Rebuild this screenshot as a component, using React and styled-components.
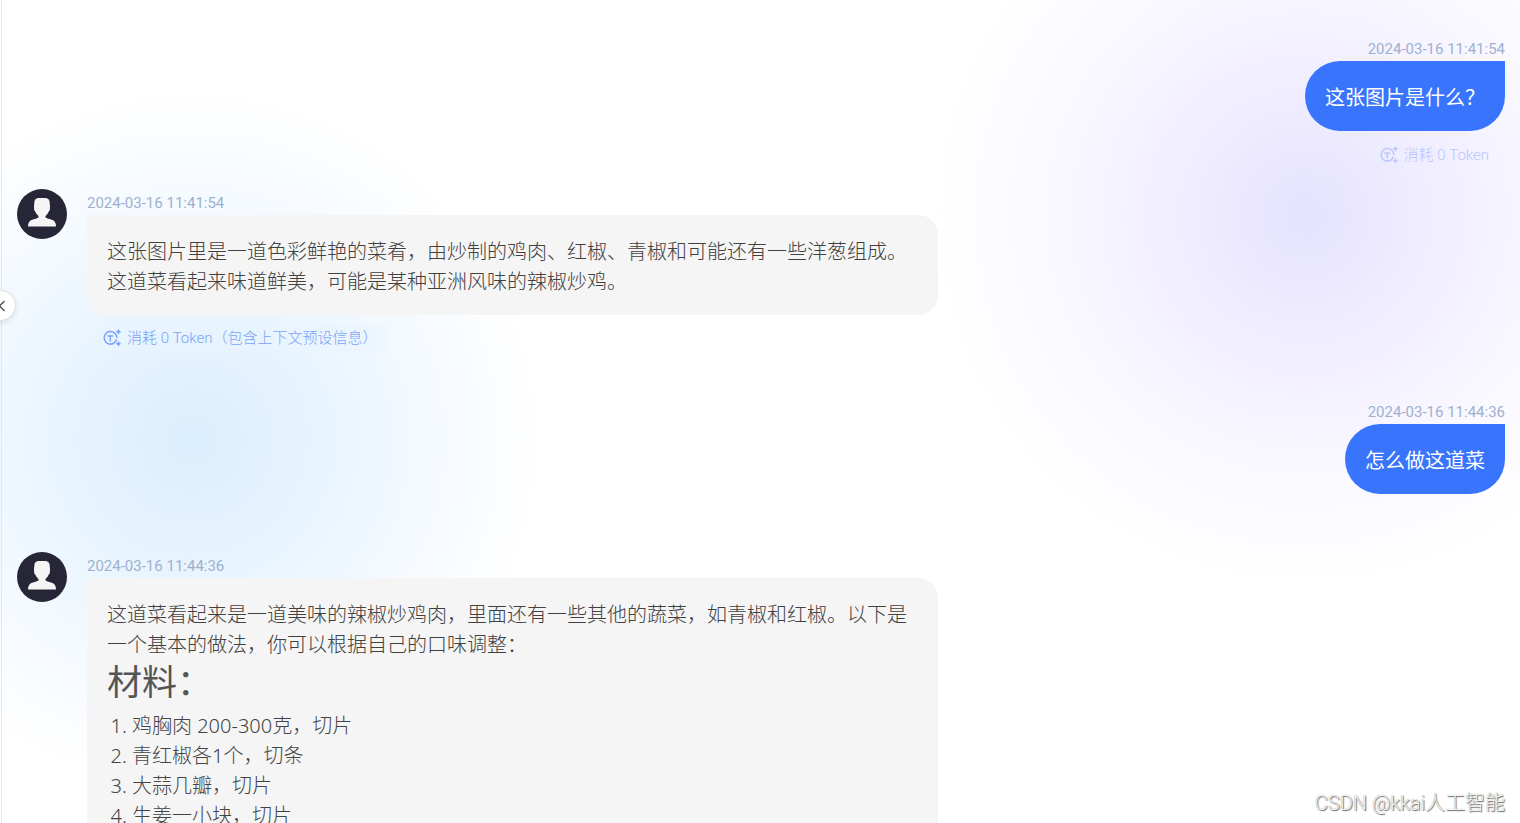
import React from "react";
import styled, { createGlobalStyle } from "styled-components";

const GlobalStyle = createGlobalStyle`
  * { box-sizing: border-box; }
  html, body { margin: 0; height: 100%; overflow: hidden; }
  #root { height: 100%; }
  body {
    font-family: "Noto Sans", "Noto Sans CJK SC", sans-serif;
    font-size: 20px;
    line-height: 30px;
    font-weight: 300;
    color: #404040;
    background: #fff;
  }
`;

const Page = styled.main`
  position: relative;
  height: 100vh;
  overflow: hidden;
  background:
    linear-gradient(#e6e8ee, #e6e8ee) 1px 0 / 1px 100% no-repeat,
    radial-gradient(circle 370px at calc(100% - 215px) 215px, #e5e2ff 0%, #efedff 32%, #f9f8ff 68%, #ffffff00 100%),
    radial-gradient(circle 350px at 192px 440px, #dbeefd 0%, #e7f4fe 35%, #f5faff 70%, #ffffff00 100%),
    #fff;
`;

const Thread = styled.div`
  display: flex;
  flex-direction: column;
  padding: 39px 15px 0 17px;
`;

const UserTurn = styled.section`
  display: flex;
  flex-direction: column;
  align-items: flex-end;
  margin-bottom: ${(p) => (p.$last ? 58 : 21)}px;
`;

const BotTurn = styled.section`
  display: flex;
  align-items: flex-start;
  gap: 20px;
  margin-bottom: 51px;
`;

const BotBody = styled.div`
  display: flex;
  flex-direction: column;
  align-items: flex-start;
  padding-top: 4px;
  flex: 0 1 851px;
  min-width: 0;
`;

const Time = styled.time`
  font: 400 15px/20px Roboto, sans-serif;
  height: 22px;
  color: #9fb0ce;
`;

const UserBubble = styled.p`
  margin: 0;
  padding: 22px 20px 18px;
  border-radius: 35px 0 35px 35px;
  background: #3875fc;
  color: #fff;
  font-weight: 400;
`;

const BotBubble = styled.div`
  width: 100%;
  padding: 22px 20px 18px;
  border-radius: 0 20px 20px 20px;
  background: #f5f5f5;
`;

const Text = styled.p`
  margin: 0;
`;

const Heading = styled.h2`
  margin: 0 0 8px;
  color: #555;
  font-size: 35px;
  line-height: 43px;
  font-weight: 400;
`;

const List = styled.ol`
  margin: 0;
  padding-left: 25px;
  color: #444;
`;

const Usage = styled.div`
  display: flex;
  align-items: center;
  gap: 6px;
  height: 26px;
  margin: ${(p) => (p.$faded ? "11px 4px 0 0" : "10px 0 0 6px")};
  padding: 0 12px 0 10px;
  border-radius: 6px;
  background: ${(p) => (p.$faded ? "transparent" : "#e9f3fe80")};
  color: ${(p) => (p.$faded ? "#b9c7fd" : "#79a3fb")};
  font: 300 15px/20px Roboto, "Noto Sans CJK SC", sans-serif;
`;

const AvatarArt = styled.svg`
  flex: none;
  width: 50px;
  height: 50px;
`;

const Collapse = styled.button`
  position: absolute;
  left: -15px;
  top: 290px;
  width: 31px;
  height: 31px;
  padding: 0;
  display: flex;
  align-items: center;
  justify-content: center;
  border: 1px solid #dcdfe6;
  border-radius: 50%;
  background: #fff;
  color: #4b4f58;
  box-shadow: 0 2px 6px #0000001a;
`;

const Watermark = styled.div`
  position: absolute;
  right: 15px;
  bottom: 5px;
  color: #f4f4f4;
  font-family: Roboto, "Noto Sans CJK SC", sans-serif;
  text-shadow: 1px 1px 1px #666, 0 0 1px #999;
`;

function Avatar() {
  return (
    <AvatarArt viewBox="0 0 50 50" role="img" aria-label="AI">
      <circle cx="25" cy="25" r="25" fill="#272636" />
      <path
        fill="#f5f5f5"
        d="M17.500 12Q18 9.500 21 9H29Q32 9.500 32.500 12L33 17Q33.500 21 31.500 23Q30.500 25.500 28.500 27V28.500Q30 29.500 34 30.500Q39 31.500 39 37.500H11Q11 31.500 16 30.500Q20 29.500 21.500 28.500V27Q19.500 25.500 18.500 23Q16.500 21 17 17Z"
      />
    </AvatarArt>
  );
}

function TokenIcon() {
  return (
    <svg width="18" height="18" viewBox="0 0 18 18" fill="none" stroke="currentColor" strokeWidth="1.500">
      <path d="M11.500 3.900A6.300 6.300 0 1 0 13.600 10.500M11.500 3.900Q13.900 6 13.900 9M4.500 7H10.100M7.300 7V12.500" />
      <path
        fill="currentColor"
        stroke="none"
        d="M15.500 0L16.500 1.800L18.300 2.800L16.500 3.800L15.500 5.600L14.500 3.800L12.700 2.800L14.500 1.800ZM15.500 12L16.500 13.800L18.300 14.800L16.500 15.800L15.500 17.600L14.500 15.800L12.700 14.800L14.500 13.800Z"
      />
    </svg>
  );
}

export default function App() {
  return (
    <Page lang="zh-CN">
      <GlobalStyle />
      <Thread>
        <UserTurn>
          <Time>2024-03-16 11:41:54</Time>
          <UserBubble>这张图片是什么？</UserBubble>
          <Usage $faded>
            <TokenIcon />
            <span>消耗 0 Token</span>
          </Usage>
        </UserTurn>
        <BotTurn>
          <Avatar />
          <BotBody>
            <Time>2024-03-16 11:41:54</Time>
            <BotBubble>
              <Text>这张图片里是一道色彩鲜艳的菜肴，由炒制的鸡肉、红椒、青椒和可能还有一些洋葱组成。这道菜看起来味道鲜美，可能是某种亚洲风味的辣椒炒鸡。</Text>
            </BotBubble>
            <Usage>
              <TokenIcon />
              <span>消耗 0 Token（包含上下文预设信息）</span>
            </Usage>
          </BotBody>
        </BotTurn>
        <UserTurn $last>
          <Time>2024-03-16 11:44:36</Time>
          <UserBubble>怎么做这道菜</UserBubble>
        </UserTurn>
        <BotTurn>
          <Avatar />
          <BotBody>
            <Time>2024-03-16 11:44:36</Time>
            <BotBubble>
              <Text>这道菜看起来是一道美味的辣椒炒鸡肉，里面还有一些其他的蔬菜，如青椒和红椒。以下是一个基本的做法，你可以根据自己的口味调整：</Text>
              <Heading>材料：</Heading>
              <List>
                <li>鸡胸肉 200-300克，切片</li>
                <li>青红椒各1个，切条</li>
                <li>大蒜几瓣，切片</li>
                <li>生姜一小块，切片</li>
              </List>
            </BotBubble>
          </BotBody>
        </BotTurn>
      </Thread>
      <Collapse type="button" aria-label="收起侧栏">
        <svg width="16" height="16" viewBox="0 0 16 16" fill="none" stroke="currentColor" strokeWidth="1.400">
          <path d="M11.500 3L6.500 8L11.500 13" />
        </svg>
      </Collapse>
      <Watermark>CSDN @kkai人工智能</Watermark>
    </Page>
  );
}
